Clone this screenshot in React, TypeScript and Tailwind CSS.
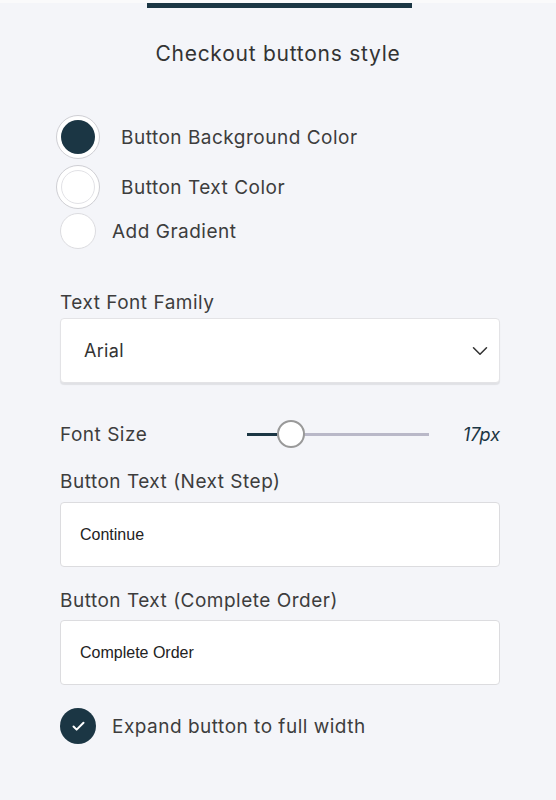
import { ChevronDown, Check } from 'lucide-react';

const labelFont = { fontFamily: 'Inter, "Noto Sans", sans-serif' };

function ColorRow({ label, dark }: { label: string; dark?: boolean }) {
  return (
    <div className="flex items-center h-[44px]">
      <div className="ml-[56px] w-[44px] h-[44px] rounded-full bg-white border border-[#cfcfd4] flex items-center justify-center">
        <div
          className={`w-[34px] h-[34px] rounded-full ${dark ? 'bg-[#1b3644]' : 'bg-white border border-[#e2e2e6]'}`}
        />
      </div>
      <span className="ml-[21px] pt-[3px] text-[19px] tracking-[0.5px] text-[#3d3d3d]">{label}</span>
    </div>
  );
}

function TextInput({ value }: { value: string }) {
  return (
    <div className="ml-[60px] mr-[56px] h-[65px] bg-white border border-[#dcdcdf] rounded-[4px] flex items-center pl-[19px]">
      <span className="text-[16px] text-[#222]" style={{ fontFamily: '"Liberation Sans", Arial, sans-serif' }}>
        {value}
      </span>
    </div>
  );
}

export default function App() {
  return (
    <div className="w-[556px] h-[800px] bg-[#f4f5f9] text-[#3d3d3d]" style={labelFont}>
      <div className="h-[3px] bg-[#fafafb]" />
      <div className="ml-[147px] w-[265px] h-[5px] bg-[#1b3644]" />

      <h1 className="mt-[32px] text-center text-[21px] leading-[28px] tracking-[0.75px] text-[#333]">
        Checkout buttons style
      </h1>

      {/* colour pickers */}
      <div className="mt-[47px] flex flex-col gap-[6px]">
        <ColorRow label="Button Background Color" dark />
        <ColorRow label="Button Text Color" />
      </div>
      <div className="mt-[4px] flex items-center h-[36px]">
        <div className="ml-[60px] w-[36px] h-[36px] rounded-full bg-white border border-[#dcdce0]" />
        <span className="ml-[16px] pt-[3px] text-[19px] tracking-[0.5px]">Add Gradient</span>
      </div>

      {/* font family */}
      <div className="mt-[42px] ml-[60px] text-[19px] tracking-[0.5px] leading-[24px]">Text Font Family</div>
      <div className="mt-[3px] ml-[60px] mr-[56px] h-[65px] bg-white border border-[#e3e3e6] rounded-[4px] shadow-[0_2px_1px_rgba(0,0,0,0.08)] flex items-center justify-between pl-[23px] pr-[6px]">
        <span className="text-[18px] tracking-[0.3px] text-[#333]">Arial</span>
        <ChevronDown className="w-[26px] h-[26px] text-[#333]" strokeWidth={1.4} />
      </div>

      {/* font size */}
      <div className="mt-[37px] ml-[60px] mr-[56px] h-[28px] flex items-center">
        <span className="w-[187px] pt-[2px] text-[19px] tracking-[0.5px]">Font Size</span>
        <div className="relative w-[182px] h-[28px] flex items-center">
          <div className="w-[30px] h-[3px] bg-[#1b3644]" />
          <div className="flex-1 h-[3px] bg-[#b9b8c8]" />
          <div className="absolute left-[30px] top-0 w-[28px] h-[28px] rounded-full bg-white border-2 border-[#999]" />
        </div>
        <span className="flex-1 text-right text-[18px] italic text-[#1b3644]">17px</span>
      </div>

      <div className="mt-[22px] ml-[60px] text-[19px] tracking-[0.5px] leading-[24px]">Button Text (Next Step)</div>
      <div className="mt-[8px]">
        <TextInput value="Continue" />
      </div>

      <div className="mt-[22px] ml-[60px] text-[19px] tracking-[0.5px] leading-[24px]">Button Text (Complete Order)</div>
      <div className="mt-[7px]">
        <TextInput value="Complete Order" />
      </div>

      <div className="mt-[23px] flex items-center h-[36px]">
        <div className="ml-[60px] w-[36px] h-[36px] rounded-full bg-[#1b3644] flex items-center justify-center">
          <Check className="w-[15px] h-[15px] text-white" strokeWidth={3.2} />
        </div>
        <span className="ml-[16px] pt-[3px] text-[19px] tracking-[0.5px]">Expand button to full width</span>
      </div>
    </div>
  );
}
